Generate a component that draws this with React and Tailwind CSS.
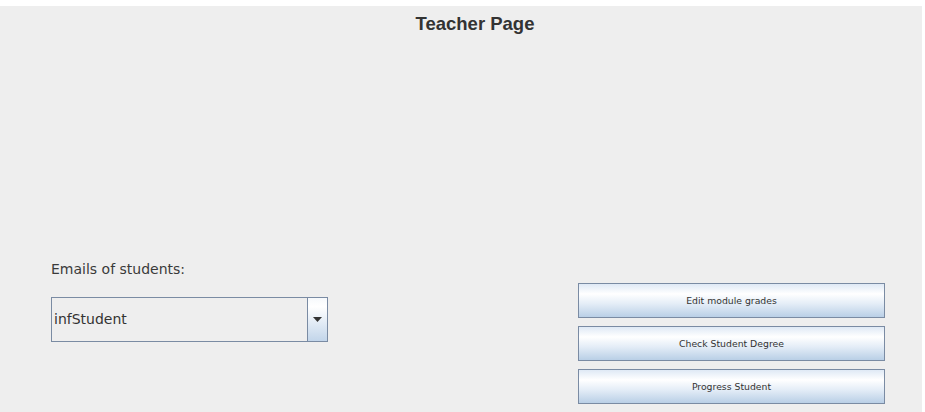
import { useState } from "react";

function GradButton({ label }) {
  return (
    <button className="h-[35px] w-[307px] border border-[#7a8ba3] bg-[linear-gradient(to_bottom,#dfe9f5_0%,#ffffff_30%,#e4edf7_60%,#b9cfe6_100%)] text-[9.3px] text-[#333333] font-['DejaVu_Sans',sans-serif]">
      {label}
    </button>
  );
}

export default function App() {
  const [student] = useState("infStudent");

  return (
    <div className="w-[925px] h-[412px] bg-white pt-[6px] pr-[3px]">
      <div className="h-full bg-[#eeeeee] flex flex-col font-['DejaVu_Sans',sans-serif]">

        <h1 className="text-center text-[18.5px] font-bold text-[#333333] leading-[22px] mt-[7px] pl-[28px] font-['Liberation_Sans',sans-serif]">Teacher Page</h1>

        <div className="flex-1" />

        <div className="flex justify-between items-end pl-[51px] pr-[37px] pb-[8px]">

          <div className="flex flex-col mb-[62px]">
            <p className="text-[14px] text-[#3a3a3a] leading-[20px] mb-[-1px]">Emails of students:</p>
            <div className="mt-[19px] flex h-[45px] w-[277px] border border-[#7a8ba3]">
              <div className="flex-1 flex items-center pl-[2px] border-r border-[#7a8ba3] text-[14px] text-[#333333]">
                {student}
              </div>
              <div className="w-[19px] flex items-center justify-center bg-[linear-gradient(to_bottom,#f6f9fc_0%,#ffffff_20%,#c2d5ea_100%)]">
                <svg width="9" height="5" viewBox="0 0 9 5">
                  <path d="M0 0H9L4.5 5Z" fill="#333333" />
                </svg>
              </div>
            </div>
          </div>

          <div className="flex flex-col gap-[8px]">
            <GradButton label="Edit module grades" />
            <GradButton label="Check Student Degree" />
            <GradButton label="Progress Student" />
          </div>

        </div>
      </div>
    </div>
  );
}
